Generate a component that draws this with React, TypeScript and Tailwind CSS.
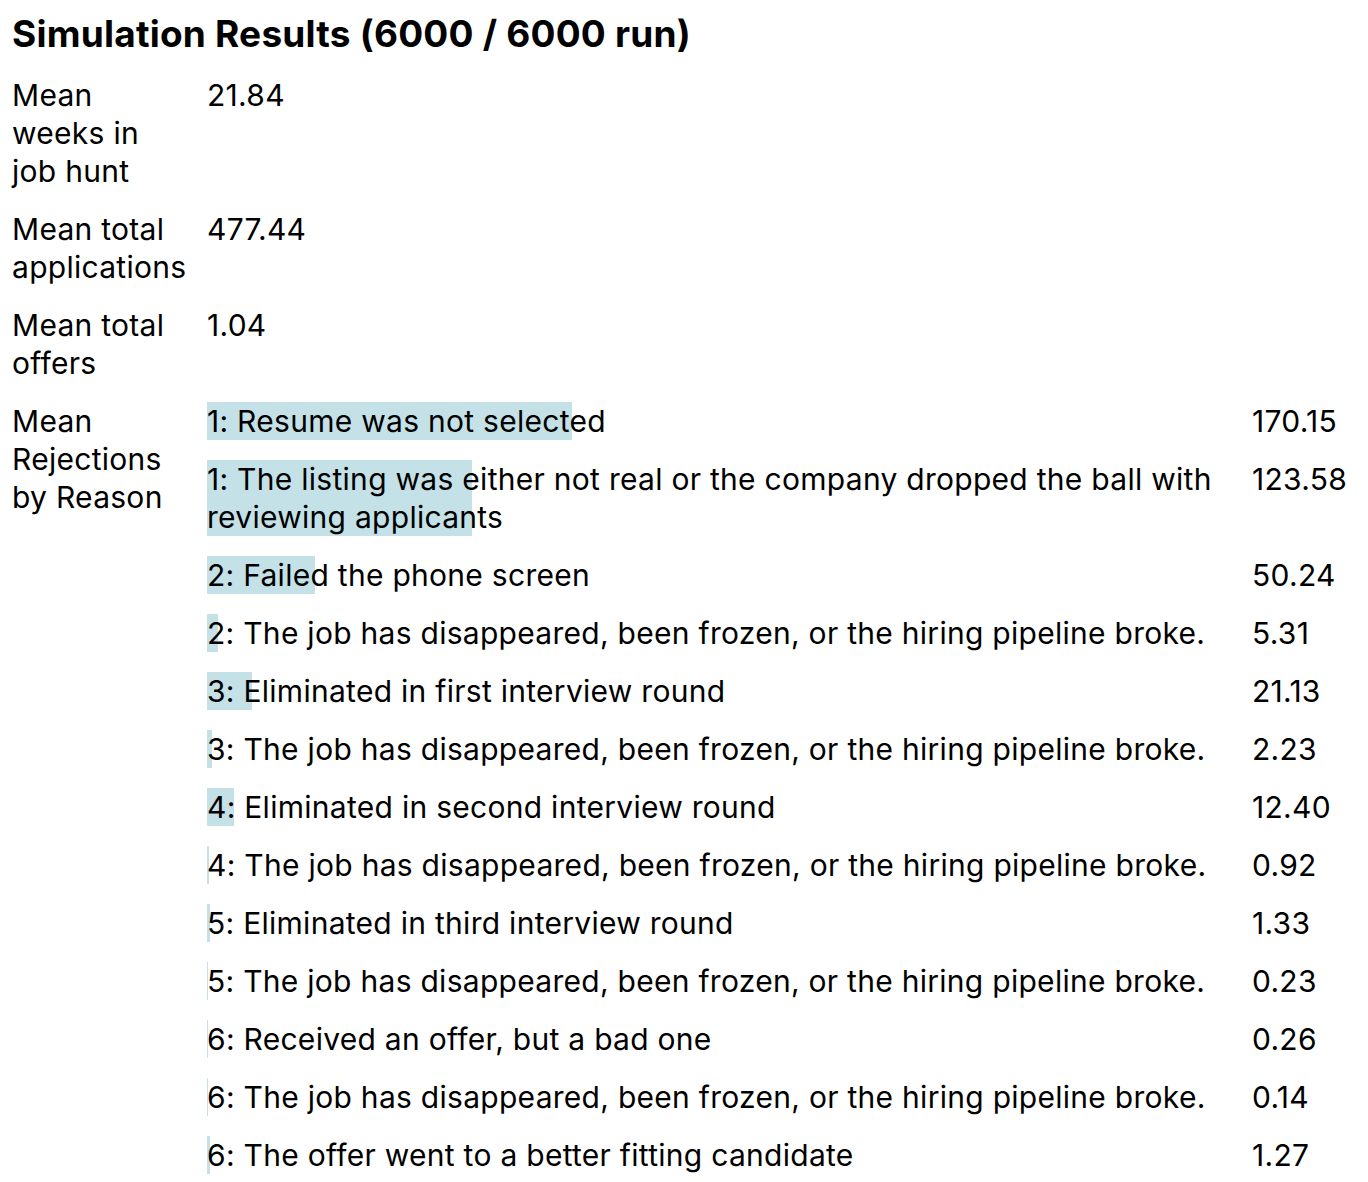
import React from "react";

const TOTAL_APPS = 477.44;

const summary = [
  { label: ["Mean", "weeks in", "job hunt"], value: "21.84" },
  { label: ["Mean total", "applications"], value: "477.44" },
  { label: ["Mean total", "offers"], value: "1.04" },
];

const reasons = [
  { text: "1: Resume was not selected", value: 170.15 },
  { text: "1: The listing was either not real or the company dropped the ball with reviewing applicants", value: 123.58 },
  { text: "2: Failed the phone screen", value: 50.24 },
  { text: "2: The job has disappeared, been frozen, or the hiring pipeline broke.", value: 5.31 },
  { text: "3: Eliminated in first interview round", value: 21.13 },
  { text: "3: The job has disappeared, been frozen, or the hiring pipeline broke.", value: 2.23 },
  { text: "4: Eliminated in second interview round", value: 12.4 },
  { text: "4: The job has disappeared, been frozen, or the hiring pipeline broke.", value: 0.92 },
  { text: "5: Eliminated in third interview round", value: 1.33 },
  { text: "5: The job has disappeared, been frozen, or the hiring pipeline broke.", value: 0.23 },
  { text: "6: Received an offer, but a bad one", value: 0.26 },
  { text: "6: The job has disappeared, been frozen, or the hiring pipeline broke.", value: 0.14 },
  { text: "6: The offer went to a better fitting candidate", value: 1.27 },
];

function Label({ lines }: { lines: string[] }) {
  return (
    <div>
      {lines.map((l, i) => (
        <div key={i}>{l}</div>
      ))}
    </div>
  );
}

export default function App() {
  return (
    <div className="min-h-screen bg-white px-[12px] text-black font-['Inter',sans-serif]">
      <h1 className="pt-[13px] text-[37px] leading-[42px] font-bold tracking-[0.22px]">
        Simulation Results (6000 / 6000 run)
      </h1>

      <div className="mt-[21px] grid grid-cols-[185px_1fr] gap-x-[10px] gap-y-[20px] text-[30px] leading-[38px] tracking-[0.28px]">
        {summary.map((s) => (
          <React.Fragment key={s.value}>
            <Label lines={s.label} />
            <div>{s.value}</div>
          </React.Fragment>
        ))}

        <Label lines={["Mean", "Rejections", "by Reason"]} />
        <div className="grid grid-cols-[1024px_1fr] gap-x-[21px] gap-y-[20px]">
          {reasons.map((r, i) => (
            <React.Fragment key={i}>
              <div className="relative">
                <div
                  className="absolute left-0 top-0 h-full bg-[#c3e1e7]"
                  style={{ width: `${(r.value / TOTAL_APPS) * 100}%` }}
                />
                <span className="relative">{r.text}</span>
              </div>
              <div>{r.value.toFixed(2)}</div>
            </React.Fragment>
          ))}
        </div>
      </div>
    </div>
  );
}
